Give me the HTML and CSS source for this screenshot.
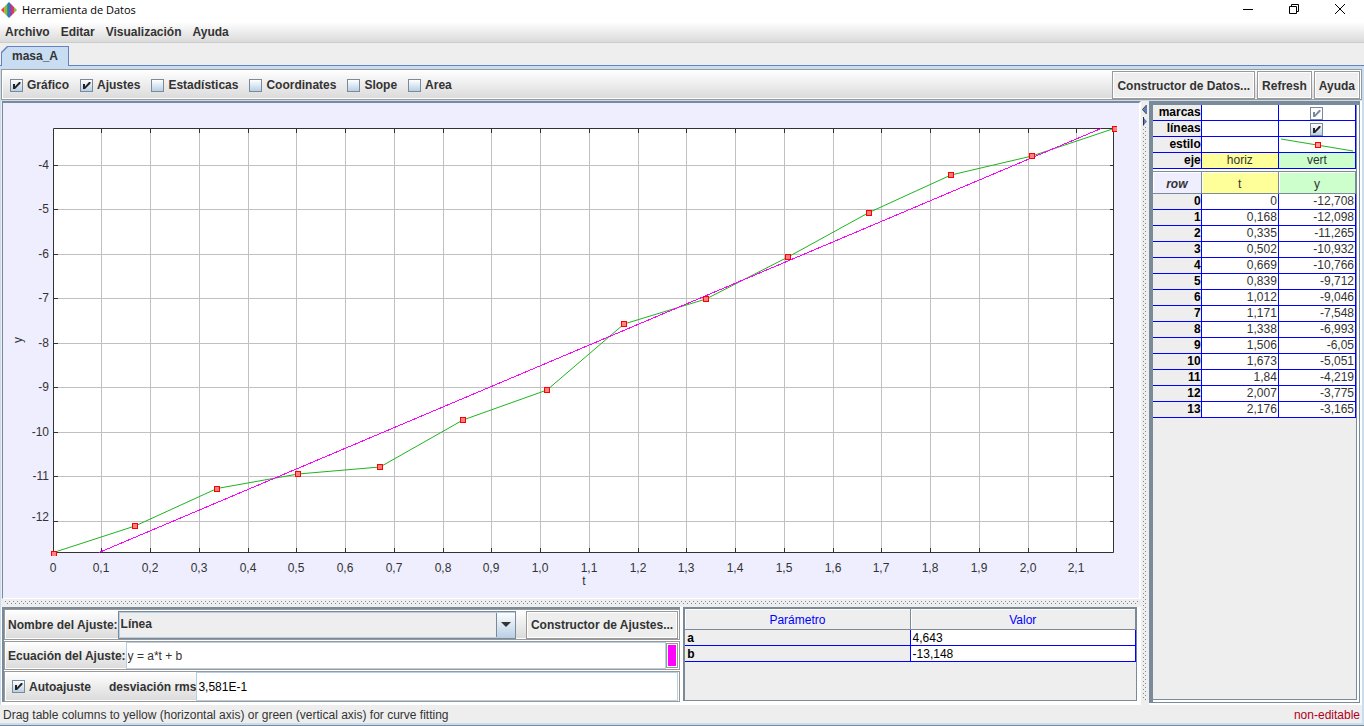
FILE: index.html
```html
<!DOCTYPE html>
<html lang="es">
<head>
<meta charset="utf-8">
<title>Herramienta de Datos</title>
<link rel="stylesheet" href="styles.css">
</head>
<body>
<div class="window">
  <header class="titlebar">
    <svg class="app-icon" width="16" height="16" viewBox="0 0 16 16" aria-hidden="true">
      <path fill="#ee3a4c" d="M0 8l3-3v6z"/><path fill="#e8a03a" d="M3 5l1-1v8l-1-1z"/>
      <path fill="#7cc243" d="M4 4l2-2v12l-2-2z"/><path fill="#2f9a8c" d="M6 2l1-1v14l-1-1z"/>
      <path fill="#3277b8" d="M7 1l1-1 1 1v14l-1 1-1-1z"/><path fill="#9b3fa0" d="M9 1l2 2v10l-2 2z"/>
      <path fill="#e33566" d="M11 3l2 2v6l-2 2z"/><path fill="#7cc243" d="M13 5l3 3-3 3z"/>
    </svg>
    <h1 class="title">Herramienta de Datos</h1>
    <div class="window-buttons">
      <button class="window-button" aria-label="Minimizar"><svg width="12" height="12"><path d="M1 6.500h10"/></svg></button>
      <button class="window-button" aria-label="Restaurar"><svg width="12" height="12"><path d="M1.500 3.500h7v7h-7zM3.500 3.500v-2h7v7h-2"/></svg></button>
      <button class="window-button" aria-label="Cerrar"><svg width="12" height="12"><path d="M1 1l10 10M11 1L1 11"/></svg></button>
    </div>
  </header>

  <nav class="menubar">
    <button class="menu">Archivo</button>
    <button class="menu">Editar</button>
    <button class="menu">Visualización</button>
    <button class="menu">Ayuda</button>
  </nav>

  <div class="tabs" role="tablist"><button class="tab" role="tab" aria-selected="true"><span>masa_A</span></button></div>

  <main class="page">
    <div class="toolbar">
      <label class="check"><input type="checkbox" checked>Gráfico</label>
      <label class="check"><input type="checkbox" checked>Ajustes</label>
      <label class="check"><input type="checkbox">Estadísticas</label>
      <label class="check"><input type="checkbox">Coordinates</label>
      <label class="check"><input type="checkbox">Slope</label>
      <label class="check"><input type="checkbox">Area</label>
      <div class="toolbar-actions">
        <button class="button">Constructor de Datos...</button>
        <button class="button">Refresh</button>
        <button class="button">Ayuda</button>
      </div>
    </div>

    <div class="split">
      <div class="left">
        <section class="chart">
          <svg viewBox="3 103 1136 495" role="img" aria-label="Gráfico de y frente a t">
            <defs><clipPath id="plot"><rect x="50" y="126" width="1067" height="430"/></clipPath></defs>
            <rect x="53" y="128" width="1061" height="424" fill="#fff"/>
            <path class="grid" d="M101.500 129V552M150.500 129V552M199.500 129V552M248.500 129V552M296.500 129V552M345.500 129V552M394.500 129V552M443.500 129V552M491.500 129V552M540.500 129V552M589.500 129V552M638.500 129V552M686.500 129V552M735.500 129V552M784.500 129V552M833.500 129V552M881.500 129V552M930.500 129V552M979.500 129V552M1028.500 129V552M1076.500 129V552M54 165.500H1113M54 209.500H1113M54 254.500H1113M54 298.500H1113M54 343.500H1113M54 387.500H1113M54 432.500H1113M54 476.500H1113M54 521.500H1113"/>
            <path class="axis" d="M53.500 128.500H1113.500V552.500H53.500Z"/>
            <path class="axis" d="M101.500 128v5m0 415v4M150.500 128v5m0 415v4M199.500 128v5m0 415v4M248.500 128v5m0 415v4M296.500 128v5m0 415v4M345.500 128v5m0 415v4M394.500 128v5m0 415v4M443.500 128v5m0 415v4M491.500 128v5m0 415v4M540.500 128v5m0 415v4M589.500 128v5m0 415v4M638.500 128v5m0 415v4M686.500 128v5m0 415v4M735.500 128v5m0 415v4M784.500 128v5m0 415v4M833.500 128v5m0 415v4M881.500 128v5m0 415v4M930.500 128v5m0 415v4M979.500 128v5m0 415v4M1028.500 128v5m0 415v4M1076.500 128v5m0 415v4M54 165.500h4m1052 0h4M54 209.500h4m1052 0h4M54 254.500h4m1052 0h4M54 298.500h4m1052 0h4M54 343.500h4m1052 0h4M54 387.500h4m1052 0h4M54 432.500h4m1052 0h4M54 476.500h4m1052 0h4M54 521.500h4m1052 0h4"/>
            <polyline class="data" points="53.500,552.500 135,526 217,488.500 298,474 380,467 463,420 547,390 624,324 706,299 788,257 869,212.500 951,175 1032,156 1114,128.500"/>
            <path class="fit" d="M99 552.500L1101 128.500"/>
            <g class="markers" clip-path="url(#plot)">
              <rect x="51.500" y="551.500" width="5" height="5"/><rect x="132.500" y="523.500" width="5" height="5"/>
              <rect x="214.500" y="486.500" width="5" height="5"/><rect x="295.500" y="471.500" width="5" height="5"/>
              <rect x="377.500" y="464.500" width="5" height="5"/><rect x="460.500" y="417.500" width="5" height="5"/>
              <rect x="544.500" y="387.500" width="5" height="5"/><rect x="621.500" y="321.500" width="5" height="5"/>
              <rect x="703.500" y="296.500" width="5" height="5"/><rect x="785.500" y="254.500" width="5" height="5"/>
              <rect x="866.500" y="210.500" width="5" height="5"/><rect x="948.500" y="172.500" width="5" height="5"/>
              <rect x="1029.500" y="153.500" width="5" height="5"/><rect x="1112.500" y="126.500" width="5" height="5"/>
            </g>
            <g class="x-labels">
              <text x="53" y="572">0</text><text x="101" y="572">0,1</text><text x="150" y="572">0,2</text><text x="199" y="572">0,3</text><text x="248" y="572">0,4</text><text x="296" y="572">0,5</text><text x="345" y="572">0,6</text><text x="394" y="572">0,7</text><text x="443" y="572">0,8</text><text x="491" y="572">0,9</text><text x="540" y="572">1,0</text><text x="589" y="572">1,1</text><text x="638" y="572">1,2</text><text x="686" y="572">1,3</text><text x="735" y="572">1,4</text><text x="784" y="572">1,5</text><text x="833" y="572">1,6</text><text x="881" y="572">1,7</text><text x="930" y="572">1,8</text><text x="979" y="572">1,9</text><text x="1028" y="572">2,0</text><text x="1076" y="572">2,1</text>
              <text x="584" y="585">t</text>
            </g>
            <g class="y-labels">
              <text x="49" y="169">-4</text><text x="49" y="213">-5</text><text x="49" y="258">-6</text><text x="49" y="302">-7</text><text x="49" y="347">-8</text><text x="49" y="391">-9</text><text x="49" y="436">-10</text><text x="49" y="480">-11</text><text x="49" y="521">-12</text>
            </g>
            <text text-anchor="middle" transform="translate(22 340) rotate(-90)">y</text>
          </svg>
        </section>

        <div class="divider horizontal"></div>

        <div class="bottom">
          <form class="fit-panel">
            <div class="bar name-bar">
              <label for="fit-name">Nombre del Ajuste:</label>
              <select id="fit-name" class="combo"><option>Línea</option></select>
              <button type="button" class="button">Constructor de Ajustes...</button>
            </div>
            <div class="bar equation-bar">
              <label for="equation">Ecuación del Ajuste:</label>
              <input id="equation" class="field equation" type="text" value="y = a*t + b">
              <button type="button" class="swatch" aria-label="Color del ajuste"></button>
            </div>
            <div class="bar rms-bar">
              <label class="check"><input type="checkbox" checked>Autoajuste</label>
              <label class="rms-label" for="rms">desviación rms</label>
              <input id="rms" class="field" type="text" value="3,581E-1" readonly>
            </div>
          </form>
          <section class="param-panel">
            <table class="params">
              <thead><tr><th>Parámetro</th><th>Valor</th></tr></thead>
              <tbody>
                <tr><th>a</th><td>4,643</td></tr>
                <tr><th>b</th><td>-13,148</td></tr>
              </tbody>
            </table>
          </section>
        </div>
      </div>

      <div class="divider vertical">
        <svg width="8" height="24" viewBox="0 0 8 24" aria-hidden="true"><path fill="#5a7bc4" d="M6 4v9L2 8.500zM2 16v9l4-4.500z"/><path stroke="#333" fill="none" d="M5.500 4L1.500 8.500 5.500 13M2.500 16v8"/></svg>
      </div>

      <aside class="data-panel">
        <div class="data-inner">
        <table class="grid-table style-table">
          <colgroup><col class="col-row"><col><col></colgroup>
          <tbody>
            <tr><th>marcas</th><td></td><td class="center"><input type="checkbox" aria-label="marcas" checked disabled></td></tr>
            <tr><th>líneas</th><td></td><td class="center"><input type="checkbox" aria-label="líneas" checked></td></tr>
            <tr><th>estilo</th><td></td><td class="center"><svg class="sample" width="74" height="15" viewBox="0 0 74 15"><path stroke="#1eb41e" d="M1 2L73 14"/><rect x="35.500" y="5.500" width="5" height="5" fill="#f99" stroke="red"/></svg></td></tr>
            <tr><th>eje</th><td class="center yellow">horiz</td><td class="center green">vert</td></tr>
          </tbody>
        </table>
        <table class="grid-table value-table">
          <colgroup><col class="col-row"><col><col></colgroup>
          <thead><tr><th class="corner">row</th><th class="yellow">t</th><th class="green">y</th></tr></thead>
          <tbody>
            <tr><th>0</th><td>0</td><td>-12,708</td></tr>
            <tr><th>1</th><td>0,168</td><td>-12,098</td></tr>
            <tr><th>2</th><td>0,335</td><td>-11,265</td></tr>
            <tr><th>3</th><td>0,502</td><td>-10,932</td></tr>
            <tr><th>4</th><td>0,669</td><td>-10,766</td></tr>
            <tr><th>5</th><td>0,839</td><td>-9,712</td></tr>
            <tr><th>6</th><td>1,012</td><td>-9,046</td></tr>
            <tr><th>7</th><td>1,171</td><td>-7,548</td></tr>
            <tr><th>8</th><td>1,338</td><td>-6,993</td></tr>
            <tr><th>9</th><td>1,506</td><td>-6,05</td></tr>
            <tr><th>10</th><td>1,673</td><td>-5,051</td></tr>
            <tr><th>11</th><td>1,84</td><td>-4,219</td></tr>
            <tr><th>12</th><td>2,007</td><td>-3,775</td></tr>
            <tr><th>13</th><td>2,176</td><td>-3,165</td></tr>
          </tbody>
        </table>
        </div>
      </aside>
    </div>
  </main>

  <footer class="status">
    <span>Drag table columns to yellow (horizontal axis) or green (vertical axis) for curve fitting</span>
    <span class="readonly">non-editable</span>
  </footer>
</div>
</body>
</html>
```
FILE: styles.css
```css
* { box-sizing: border-box; }

body {
  margin: 0;
  font: 12px/16px "Liberation Sans", Arial, sans-serif;
  color: #333;
}

button, input, select { font: inherit; color: inherit; margin: 0; }

.window {
  display: flex;
  flex-direction: column;
  min-height: 100vh;
  background: #eee;
  border-bottom: 1px solid #7a8a99;
}

/* Title bar */
.titlebar {
  display: flex;
  align-items: center;
  height: 22px;
  padding: 0 10px 2px 1px;
  background: #fff;
}
.title {
  flex: 1;
  margin: 0 0 0 5px;
  font: 11px/16px "Open Sans", "Noto Sans", sans-serif;
  color: #000;
}
.window-buttons { display: flex; gap: 18px; padding-bottom: 2px; }
.window-button {
  display: grid;
  place-items: center;
  width: 28px;
  height: 16px;
  padding: 0;
  border: 0;
  background: none;
}
.window-button path { fill: none; stroke: #000; }

/* Menu bar */
.menubar {
  display: flex;
  gap: 12px;
  height: 21px;
  padding: 0 5px;
  background: linear-gradient(#fff, #dadada);
  border-bottom: 1px solid #ccc;
}
.menu { padding: 0; border: 0; background: none; font-weight: bold; }
.menu + .menu { margin-left: -1px; }

/* Tabs */
.tabs {
  display: flex;
  align-items: flex-end;
  height: 23px;
  padding-left: 1px;
  box-shadow: inset 0 -1px #6382bf;
}
.tab {
  position: relative;
  height: 20px;
  padding: 0 11px;
  border: 0;
  background: #6382bf;
  font-weight: bold;
  clip-path: polygon(0 6px, 6px 0, 100% 0, 100% 100%, 0 100%);
}
.tab::before {
  content: "";
  position: absolute;
  inset: 1px 1px 0;
  background: #c8ddf2;
  clip-path: polygon(0 6px, 6px 0, 100% 0, 100% 100%, 0 100%);
}
.tab span { position: relative; }

/* Page body */
.page {
  flex: 1;
  display: flex;
  flex-direction: column;
  padding: 3px 2px 0 1px;
  background: #c8ddf2;
}

.toolbar, .bar {
  display: flex;
  align-items: center;
  border: 1px solid #999;
  box-shadow: inset 0 0 0 1px #fff;
  background: linear-gradient(#fff, #dadada);
  font-weight: bold;
}
.toolbar { gap: 11px; height: 31px; padding: 1px 1px 0 8px; margin-bottom: 1px; }
.toolbar-actions { display: flex; gap: 2px; margin-left: auto; }

.check { display: flex; align-items: center; gap: 4px; white-space: nowrap; }
input[type="checkbox"] {
  appearance: none;
  width: 13px;
  height: 13px;
  border: 1px solid #7a8a99;
  background: linear-gradient(#fff, #b8cfe5);
}
input[type="checkbox"]:checked {
  background: url("data:image/svg+xml,%3Csvg xmlns='http://www.w3.org/2000/svg' viewBox='0 0 11 11'%3E%3Cpath fill='%23222' d='M2 4h2v2.500L8 2h1.500v1.500L4 9H2z'/%3E%3C/svg%3E"), linear-gradient(#fff, #b8cfe5);
}
input[type="checkbox"]:disabled {
  background: url("data:image/svg+xml,%3Csvg xmlns='http://www.w3.org/2000/svg' viewBox='0 0 11 11'%3E%3Cpath fill='%237a8a99' d='M2 4h2v2.500L8 2h1.500v1.500L4 9H2z'/%3E%3C/svg%3E"), #fff;
}

.button {
  height: 28px;
  padding: 1px 4px 0;
  border: 1px solid #999;
  border-radius: 0;
  box-shadow: inset 0 0 0 1px #fff;
  background: #eee;
  font-weight: bold;
  white-space: nowrap;
}

.split { flex: 1; display: flex; background: #fff; }
.left { flex: 1; display: flex; flex-direction: column; min-width: 0; background: #eee; }

.chart {
  flex: 1;
  min-height: 0;
  margin-left: 1px;
  border: solid #fff;
  border-width: 2px 2px 1px 1px;
  border-top-color: #7a8a99;
  border-left-color: #7a8a99;
  background: #eef;
}
.chart svg { display: block; width: 100%; height: 100%; }
.chart text { font-size: 12px; fill: #333; }
.grid { fill: none; stroke: silver; }
.axis { fill: none; stroke: #333; }
.data { fill: none; stroke: #1eb41e; }
.fit { fill: none; stroke: #f0f; shape-rendering: crispEdges; }
.markers rect { fill: #ff8080; stroke: red; }
.x-labels { text-anchor: middle; }
.y-labels { text-anchor: end; }

.divider {
  --dot: conic-gradient(at 1px 1px, transparent 75%, #7a8a99 0);
  background: var(--dot) 0 0 / 4px 4px, var(--dot) 2px 2px / 4px 4px, #eee;
  background-clip: content-box, content-box, border-box;
  background-origin: content-box;
}
.horizontal { height: 8px; padding: 2px 2px 2px 4px; }
.vertical { width: 8px; padding: 4px 2px; }
.vertical svg { display: block; margin: -4px -2px 0; background: #eee; }

/* Fit controls */
.bottom { display: flex; height: 98px; background: #fff; }
.fit-panel {
  flex: 3 1 0;
  display: flex;
  flex-direction: column;
  gap: 1px;
  margin: 0 3px 3px 1px;
  border: solid #7a8a99;
  border-width: 2px 0 0 2px;
}
.bar { padding: 0 1px 0 3px; }
.bar label { white-space: nowrap; }
.name-bar { height: 31px; }
.name-bar .button { margin-left: 10px; }
.equation-bar { height: 29px; }
.rms-bar { height: 31px; padding-left: 7px; }
.rms-label { margin-left: 18px; }

.combo {
  flex: 1;
  min-width: 0;
  height: 28px;
  padding: 0 20px 2px 2px;
  appearance: none;
  border: 1px solid #7a8a99;
  border-radius: 0;
  background-color: #eee;
  background-image:
    url("data:image/svg+xml,%3Csvg xmlns='http://www.w3.org/2000/svg' viewBox='0 0 10 5'%3E%3Cpath fill='%23333' d='M0 0h10L5 5z'/%3E%3C/svg%3E"),
    linear-gradient(#7a8a99, #7a8a99),
    linear-gradient(#fff, #b8cfe5);
  background-position: right 4px center, right 18px top, right top;
  background-size: 10px 5px, 1px 100%, 18px 100%;
  background-repeat: no-repeat;
  box-shadow: inset 1px 1px #b8cfe5, inset 0 -1px #b8cfe5;
}
.field {
  flex: 1;
  min-width: 0;
  height: 27px;
  padding: 0 1px;
  border: 1px solid #b8cfe5;
  background: #fff;
  color: #000;
  font-weight: normal;
}
.rms-bar .field { height: 29px; }
.equation { color: #333; }
.swatch {
  width: 12px;
  height: 25px;
  padding: 0;
  border: 1px solid #999;
  background: #f0f;
  box-shadow: inset 0 0 0 1px #fff;
}

/* Fit parameters */
.param-panel {
  flex: 2 1 0;
  margin: 0 4px 4px 0;
  border: solid #7a8a99;
  border-width: 2px 1px 1px 2px;
  background: #eee;
}
.params, .grid-table {
  width: 100%;
  table-layout: fixed;
  border-collapse: separate;
  border-spacing: 0;
}
.params thead th {
  height: 21px;
  padding: 2px 0 0;
  border: solid #7a8a99;
  border-width: 0 1px 1px 0;
  box-shadow: inset 1px 1px #fff;
  color: #00f;
  font-weight: normal;
}
.params tbody th, .params td {
  height: 16px;
  padding: 1px 2px 0;
  border: solid #00f;
  border-width: 0 1px 1px 0;
  line-height: 14px;
  color: #000;
  text-align: left;
}
.params td { background: #fff; }

/* Data table */
.data-panel {
  width: 211px;
  margin: 0 2px 2px 0;
  padding: 0 2px 2px 0;
  border: solid #7a8a99;
  border-width: 4px 1px 1px 4px;
}
.data-inner {
  height: 100%;
  border: solid #7a8a99;
  border-width: 0 1px 1px 0;
  background: #eee;
}
.col-row { width: 24%; }
.grid-table th, .grid-table td {
  height: 16px;
  padding: 0 1px;
  border: solid #00f;
  border-width: 0 1px 1px 0;
  line-height: 15px;
  text-align: right;
  white-space: nowrap;
}
.grid-table tbody th { padding: 0; background: #eee; color: #000; }
.grid-table td { background: #fff; }
.grid-table td.center { padding: 0; text-align: center; }
.grid-table input, .sample { display: block; margin: 1px auto 0; }
.grid-table .sample { margin: 0 auto; }
.grid-table .yellow { background: #ff9; }
.grid-table .green { background: #cfc; }
.style-table { border-bottom: 2px solid #fff; }
.value-table { border-top: 1px solid #7a8a99; }
.value-table thead th {
  height: 22px;
  padding: 3px 0 0;
  border-color: #7a8a99;
  box-shadow: inset 1px 1px #fff;
  font-weight: normal;
  text-align: center;
}
.value-table thead .corner { background: #eef; font-weight: bold; font-style: italic; }

/* Status bar */
.status {
  display: flex;
  justify-content: space-between;
  height: 20px;
  padding: 2px 2px 0 3px;
  border: solid #c8ddf2;
  border-width: 0 2px 2px 0;
}
.readonly { color: #b00020; }
```
